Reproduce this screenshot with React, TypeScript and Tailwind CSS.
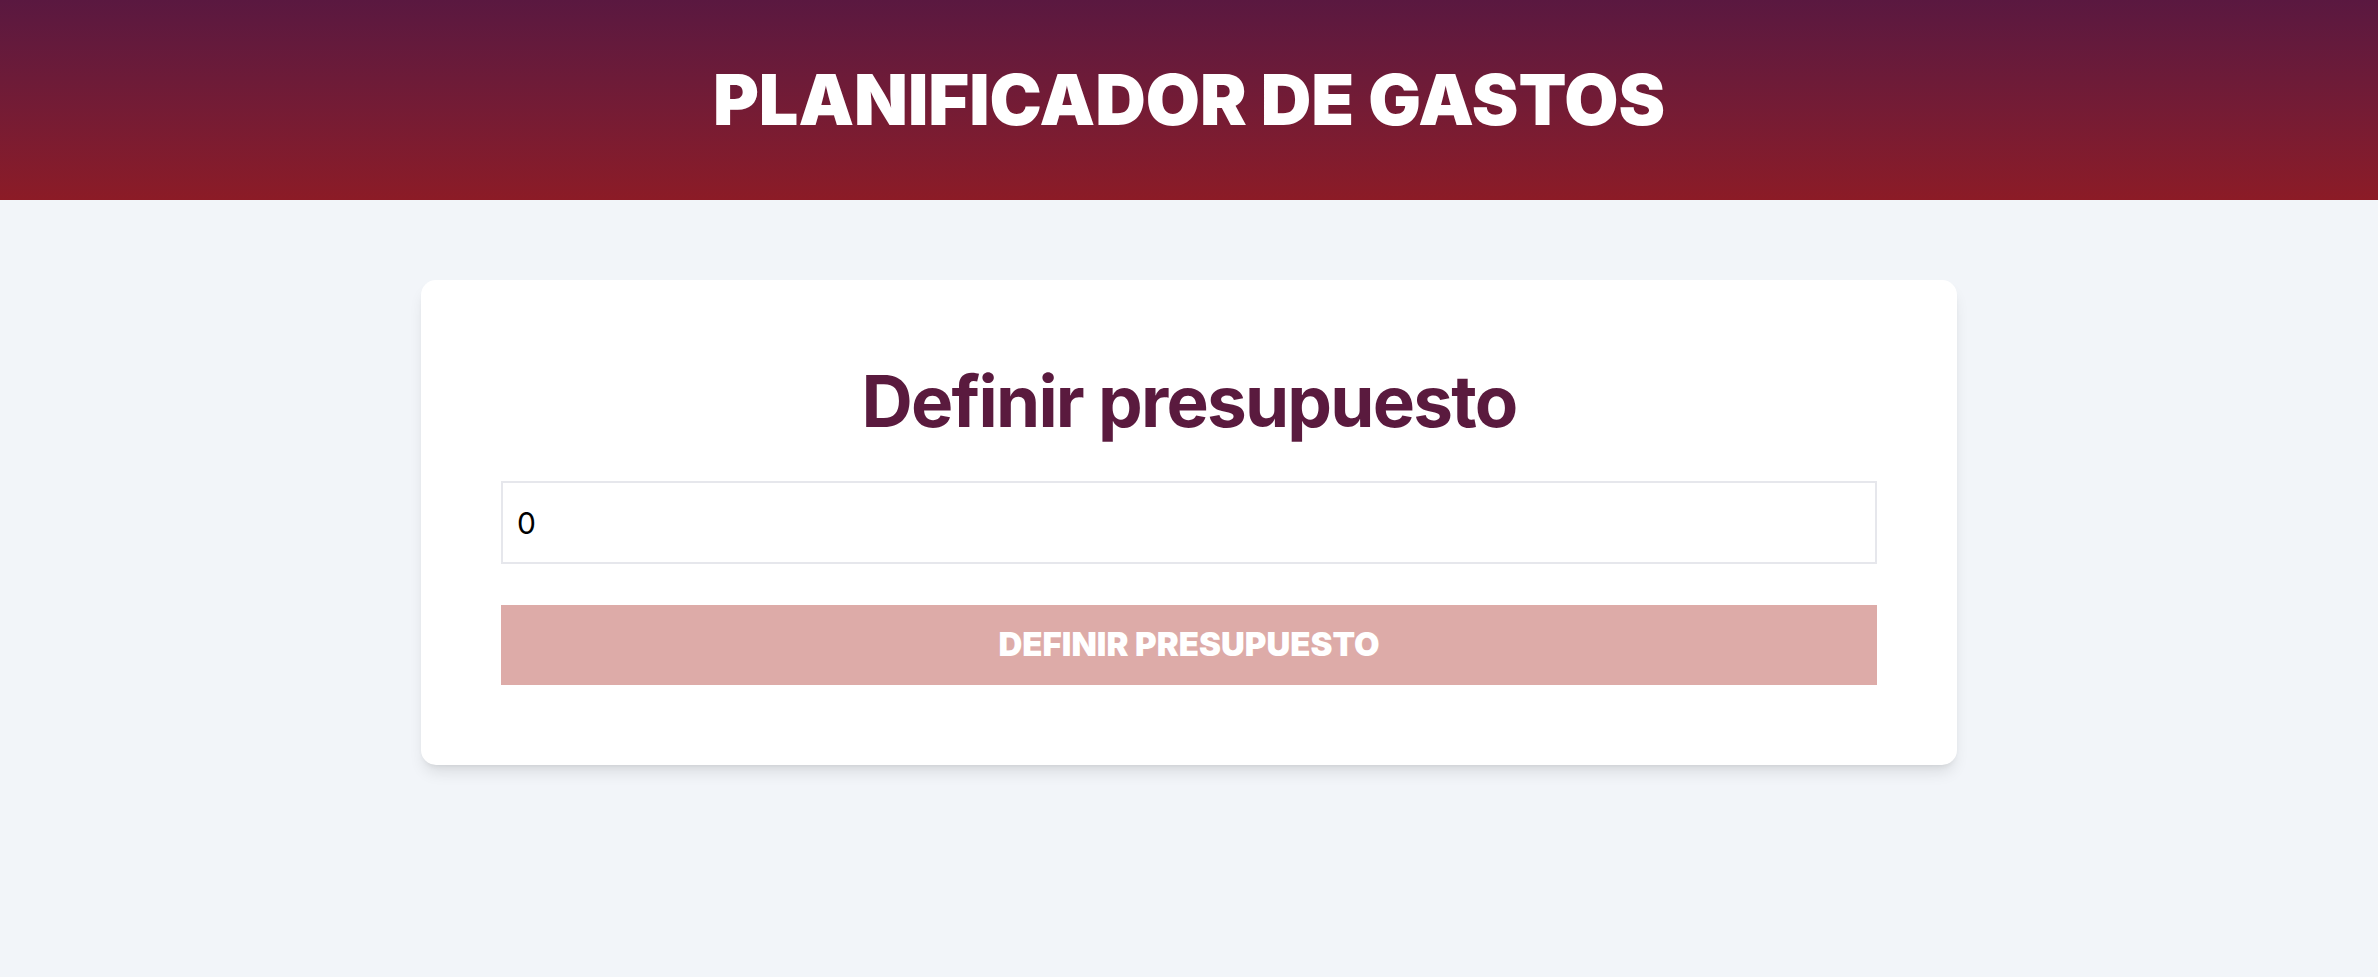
import { useState } from "react";

export default function App() {
  const [budget, setBudget] = useState("0");
  const isValid = Number(budget) > 0;

  return (
    <div className="min-h-screen bg-[#f2f5f9] font-['Inter',sans-serif]">
      <header className="h-[200px] flex items-center justify-center bg-gradient-to-b from-[#5a1840] to-[#8c1b26]">
        <h1 className="text-[70px] leading-none font-black text-white uppercase">
          Planificador de gastos
        </h1>
      </header>

      <main className="pt-[80px] pb-10">
        <form
          className="w-[1536px] mx-auto bg-white rounded-[15px] shadow-lg px-[80px] pt-[86px] pb-[80px]"
          onSubmit={(e) => e.preventDefault()}
        >
          <h2 className="text-[71px] leading-none font-bold tracking-tight text-center text-[#5a1a3e]">
            Definir presupuesto
          </h2>
          <input
            type="number"
            value={budget}
            onChange={(e) => setBudget(e.target.value)}
            className="mt-[44px] w-full h-[83px] border-2 border-[#e6e7ec] bg-white px-[14px] text-[30px] text-black outline-none"
          />
          <button
            type="submit"
            disabled={!isValid}
            className="mt-[41px] w-full h-[80px] bg-[#ddaba8] text-white text-[33px] font-black uppercase"
          >
            Definir presupuesto
          </button>
        </form>
      </main>
    </div>
  );
}
